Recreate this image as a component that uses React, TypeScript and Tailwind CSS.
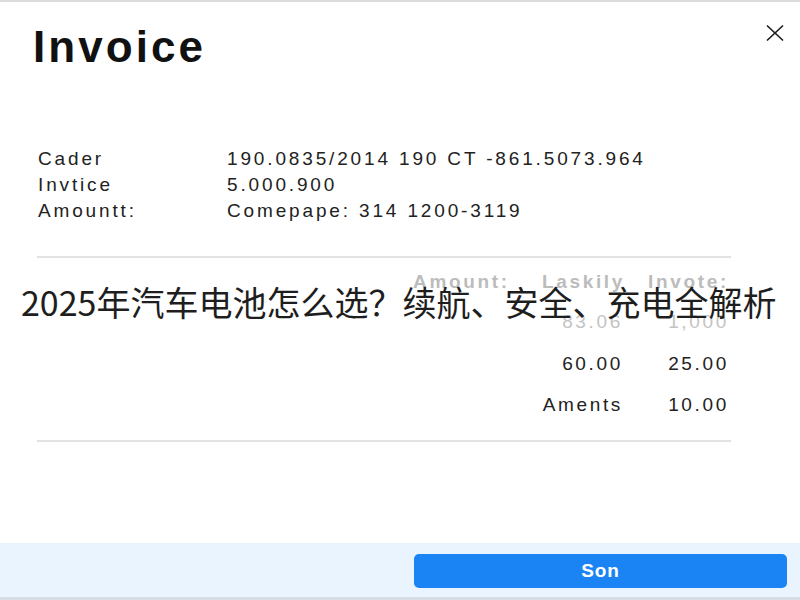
import React from "react";

const sans = { fontFamily: '"Liberation Sans", Arial, sans-serif' };

function CloseIcon() {
  return (
    <svg width="20" height="18" viewBox="0 0 20 18" fill="none" stroke="#1f1f1f" strokeWidth="1.7" strokeLinecap="round">
      <line x1="2.5" y1="2" x2="17.5" y2="16" />
      <line x1="17.5" y1="2" x2="2.5" y2="16" />
    </svg>
  );
}

const details: [string, string][] = [
  ["Cader", "190.0835/2014 190 CT -861.5073.964"],
  ["Invtice", "5.000.900"],
  ["Amountt:", "Comepape: 314 1200-3119"],
];

export default function App() {
  return (
    <div className="relative w-[800px] h-[600px] bg-white border-t-2 border-[#dcdcdc] flex flex-col overflow-hidden" style={sans}>
      {/* header */}
      <div className="flex justify-between items-start pl-[33px] pr-[15px] pt-[23px]">
        <h1 className="text-[44px] leading-[43px] font-bold tracking-[0.07em] text-[#111]">Invoice</h1>
        <div className="-mt-[1px]">
          <CloseIcon />
        </div>
      </div>

      {/* detail rows */}
      <div className="mt-[78px] pl-[38px] grid grid-cols-[189px_1fr] text-[19px] leading-[26px] tracking-[0.15em] text-[#222]">
        {details.map(([k, v]) => (
          <React.Fragment key={k}>
            <div>{k}</div>
            <div>{v}</div>
          </React.Fragment>
        ))}
      </div>

      <div className="mt-[32px] ml-[37px] w-[694px] h-[2px] bg-[#e2e2e2]" />

      {/* totals table */}
      <div className="w-[729px] flex flex-col text-[19px] tracking-[0.14em]">
        <div className="mt-[12px] h-[24px] leading-[24px] flex justify-end font-bold text-[#bcbcbc]">
          <div className="w-[100px] text-left">Amount:</div>
          <div className="w-[112px] text-right mr-[2px]">Laskily</div>
          <div className="w-[102px] text-right">Invote:</div>
        </div>
        <div className="mt-[16px] h-[24px] leading-[24px] flex justify-end text-[#c4c4c4]">
          <div className="w-[110px] text-right">83.06</div>
          <div className="w-[106px] text-right">1,000</div>
        </div>
        <div className="mt-[18px] h-[24px] leading-[24px] flex justify-end text-[#222]">
          <div className="w-[110px] text-right">60.00</div>
          <div className="w-[106px] text-right">25.00</div>
        </div>
        <div className="mt-[17px] h-[24px] leading-[24px] flex justify-end text-[#222]">
          <div className="w-[110px] text-right">Aments</div>
          <div className="w-[106px] text-right">10.00</div>
        </div>
      </div>

      <div className="mt-[23px] ml-[37px] w-[694px] h-[2px] bg-[#e2e2e2]" />

      {/* footer */}
      <div className="mt-auto h-[57px] bg-[#eaf4fe] border-b-[3px] border-[#d9dee4] flex justify-end items-start pt-[11px] pr-[13px]">
        <button className="w-[373px] h-[34px] rounded-[5px] bg-[#1a84f5] text-white text-[19px] font-bold tracking-[0.05em]">
          Son
        </button>
      </div>

      {/* headline caption over the sheet */}
      <div
        className="absolute left-[21px] top-[283px] text-[34px] leading-[34px] text-[#1e1e1e] whitespace-nowrap"
        style={{ fontFamily: '"Noto Sans CJK SC", "Noto Sans", sans-serif' }}
      >
        2025年汽车电池怎么选？续航、安全、充电全解析
      </div>
    </div>
  );
}
